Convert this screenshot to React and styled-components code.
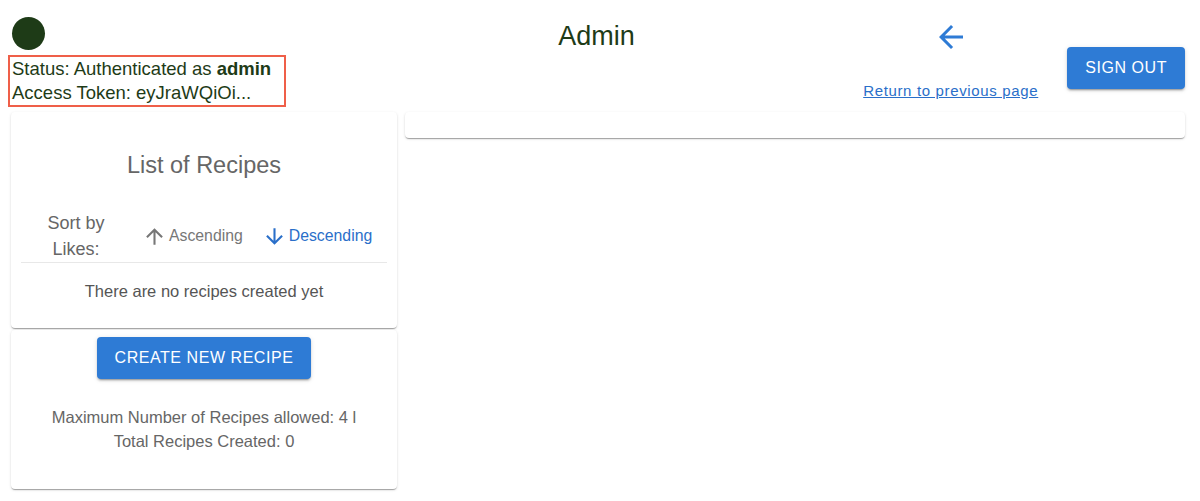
import styled, { createGlobalStyle } from 'styled-components'

const GlobalStyle = createGlobalStyle`
    body {
        margin: 0;
        font-family: "Liberation Sans", Arial, sans-serif;
        background: #fff;
    }
`

const BLUE = '#2e7bd5'
const GREEN = '#1e3b17'

const Page = styled.div`
    width: 1200px;
    height: 501px;
    overflow: hidden;
`

const Header = styled.header`
    display: grid;
    grid-template-columns: 1fr auto 1fr;
    height: 112px;
    padding: 0 15px 0 8px;
    box-sizing: border-box;
`

const UserBlock = styled.div`
    display: flex;
    flex-direction: column;
    align-items: flex-start;
    padding-top: 17px;
`

const Avatar = styled.div`
    width: 33px;
    height: 33px;
    margin-left: 4px;
    border-radius: 50%;
    background: ${GREEN};
`

const StatusBox = styled.div`
    margin-top: 5px;
    padding: 0 13px 0 2px;
    border: 2px solid #ef5f49;
    color: ${GREEN};
    font-size: 18.5px;
    line-height: 24px;
`

const Title = styled.h1`
    margin: 22px 0 0;
    font-size: 27px;
    line-height: 28px;
    font-weight: 400;
    color: ${GREEN};
`

const Actions = styled.div`
    display: flex;
    justify-content: flex-end;
    align-items: flex-start;
    gap: 29px;
`

const BackBlock = styled.div`
    display: flex;
    flex-direction: column;
    align-items: center;
    padding-top: 19px;
    gap: 26px;
`

const IconButton = styled.button`
    display: flex;
    padding: 0;
    border: none;
    background: none;
    color: ${BLUE};
    cursor: pointer;
`

const BackLink = styled.a`
    font-size: 15px;
    line-height: 20px;
    letter-spacing: 0.65px;
    color: #2a6fc9;
    text-decoration: underline;
    cursor: pointer;
`

const Button = styled.button`
    height: 42px;
    padding: 0 18px;
    border: none;
    border-radius: 4px;
    background: ${BLUE};
    color: #fff;
    font-family: inherit;
    font-size: 16px;
    letter-spacing: 0.55px;
    text-transform: uppercase;
    box-shadow: 0 3px 1px -2px rgba(0,0,0,.2), 0 2px 2px 0 rgba(0,0,0,.14), 0 1px 5px 0 rgba(0,0,0,.12);
    cursor: pointer;
`

const SignOut = styled(Button)`
    margin-top: 47px;
`

const Body = styled.main`
    display: grid;
    grid-template-columns: 386px 1fr;
    gap: 8px;
    padding: 0 15px 0 11px;
    align-items: start;
`

const Column = styled.div`
    display: flex;
    flex-direction: column;
    gap: 2px;
`

const Card = styled.section`
    border-radius: 4px;
    background: #fff;
    box-shadow: 0 2px 1px -1px rgba(0,0,0,.2), 0 1px 1px 0 rgba(0,0,0,.14), 0 1px 3px 0 rgba(0,0,0,.12);
    height: ${p => p.$height}px;
    box-sizing: border-box;
    display: flex;
    flex-direction: column;
    align-items: center;
`

const CardTitle = styled.h2`
    margin: 39px 0 0;
    font-size: 23.5px;
    line-height: 28px;
    font-weight: 400;
    color: #666;
`

const SortRow = styled.div`
    display: flex;
    align-items: center;
    align-self: stretch;
    margin: 31px 10px 0;
    border-bottom: 1px solid #e8e8e8;
`

const SortLabel = styled.div`
    width: 110px;
    text-align: center;
    font-size: 18px;
    line-height: 26px;
    color: #666;
`

const SortButton = styled.button`
    display: flex;
    align-items: center;
    gap: 2px;
    margin-left: ${p => p.$ml}px;
    padding: 0;
    border: none;
    background: none;
    font-family: inherit;
    font-size: 15.8px;
    color: ${p => (p.$active ? '#2a6fc9' : '#777')};
    cursor: pointer;
`

const Empty = styled.p`
    margin: 18px 0 0;
    font-size: 16.5px;
    line-height: 20px;
    color: #555;
`

const CreateButton = styled(Button)`
    margin-top: 7px;
`

const Info = styled.p`
    margin: 26px 0 0;
    font-size: 16.5px;
    line-height: 24px;
    text-align: center;
    color: #666;
`

const ArrowLeft = () => (
    <svg width="36" height="36" viewBox="0 0 24 24" fill="currentColor">
        <path d="M20 11H7.83l5.59-5.59L12 4l-8 8 8 8 1.41-1.41L7.83 13H20v-2z" />
    </svg>
)

const ArrowUp = () => (
    <svg width="25" height="25" viewBox="0 0 24 24" fill="currentColor">
        <path d="M4 12l1.41 1.41L11 7.83V20h2V7.83l5.58 5.59L20 12l-8-8-8 8z" />
    </svg>
)

const ArrowDown = () => (
    <svg width="25" height="25" viewBox="0 0 24 24" fill="currentColor">
        <path d="M20 12l-1.41-1.41L13 16.17V4h-2v12.17l-5.58-5.59L4 12l8 8 8-8z" />
    </svg>
)

export default function App() {
    return (
        <Page>
            <GlobalStyle />
            <Header>
                <UserBlock>
                    <Avatar />
                    <StatusBox>
                        Status: Authenticated as <b>admin</b>
                        <br />
                        Access Token: eyJraWQiOi...
                    </StatusBox>
                </UserBlock>
                <Title>Admin</Title>
                <Actions>
                    <BackBlock>
                        <IconButton aria-label="back"><ArrowLeft /></IconButton>
                        <BackLink>Return to previous page</BackLink>
                    </BackBlock>
                    <SignOut>Sign out</SignOut>
                </Actions>
            </Header>
            <Body>
                <Column>
                    <Card $height={216}>
                        <CardTitle>List of Recipes</CardTitle>
                        <SortRow>
                            <SortLabel>Sort by<br />Likes:</SortLabel>
                            <SortButton $ml={11}><ArrowUp />Ascending</SortButton>
                            <SortButton $ml={19} $active><ArrowDown />Descending</SortButton>
                        </SortRow>
                        <Empty>There are no recipes created yet</Empty>
                    </Card>
                    <Card $height={159}>
                        <CreateButton>Create new recipe</CreateButton>
                        <Info>
                            Maximum Number of Recipes allowed: 4 l
                            <br />
                            Total Recipes Created: 0
                        </Info>
                    </Card>
                </Column>
                <Card $height={26} />
            </Body>
        </Page>
    )
}
